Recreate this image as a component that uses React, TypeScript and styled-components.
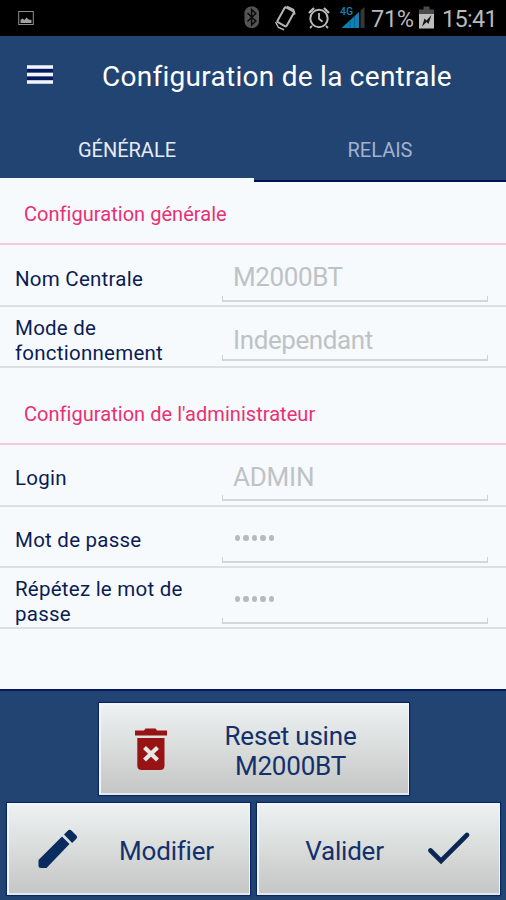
import React from 'react';
import styled, { createGlobalStyle } from 'styled-components';

const GlobalStyle = createGlobalStyle`
  * { box-sizing: border-box; }
  body { margin: 0; background: #f6fafd; font-family: Roboto, "Liberation Sans", sans-serif; }
`;

const Screen = styled.div`
  display: flex;
  flex-direction: column;
  width: 506px;
  height: 900px;
  overflow: hidden;
  background: #f6fafd;
`;

const StatusBar = styled.div`
  display: flex;
  align-items: center;
  height: 36px;
  flex: none;
  background: #000;
  color: #b9b9b9;
  svg { display: block; flex: none; }
`;

const StatusSpacer = styled.div`flex: 1;`;

const StatusText = styled.span<{ $width: number; $spacing: number }>`
  width: ${p => p.$width}px;
  flex: none;
  font-size: 23.5px;
  line-height: 36px;
  letter-spacing: ${p => p.$spacing}px;
  white-space: nowrap;
  padding-top: 2px;
`;

const AppBar = styled.header`
  display: flex;
  align-items: center;
  height: 81px;
  flex: none;
  padding-left: 26px;
  background: #224472;
`;

const MenuButton = styled.button`
  display: block;
  width: 28px;
  height: 24px;
  margin: 0 48px 2px 0;
  padding: 0;
  border: 0;
  background: none;
  svg { display: block; }
`;

const Title = styled.h1`
  margin: 0;
  color: #fff;
  font-size: 28px;
  font-weight: 400;
  line-height: 81px;
  letter-spacing: 0.27px;
  white-space: nowrap;
`;

const Tabs = styled.nav`
  display: grid;
  grid-template-columns: 254px 252px;
  height: 65px;
  flex: none;
  background: #224472;
`;

const Tab = styled.button<{ $active?: boolean }>`
  height: 65px;
  padding: ${p => (p.$active ? '4px 0 0' : '2px 0 0')};
  border: 0;
  border-bottom: ${p => (p.$active ? '4px solid #f6fafd' : '2px solid #00105a')};
  background: none;
  color: ${p => (p.$active ? '#e6ebf5' : '#a3b1cc')};
  font: 400 20px/58px Roboto, sans-serif;
`;

const Section = styled.h2<{ $height: number; $top: number }>`
  height: ${p => p.$height}px;
  flex: none;
  margin: 0;
  padding: ${p => p.$top}px 0 0 24px;
  border-bottom: 2px solid #f5cad7;
  color: #ea2f72;
  font-size: 20px;
  font-weight: 400;
  line-height: 30px;
  letter-spacing: 0.04px;
`;

const Row = styled.div<{ $height: number }>`
  display: flex;
  height: ${p => p.$height}px;
  flex: none;
  padding-left: 15px;
  border-bottom: 2px solid #dce0e4;
`;

const Label = styled.label<{ $top: number }>`
  width: 207px;
  padding: ${p => p.$top}px 20px 0 0;
  color: #0b1d54;
  font-size: 20.5px;
  line-height: 24.5px;
  letter-spacing: 0.24px;
`;

const Field = styled.div<{ $height: number; $textTop: number; $spacing?: number }>`
  width: 266px;
  height: ${p => p.$height}px;
  padding: ${p => p.$textTop}px 0 0 11px;
  color: #bfc2c5;
  font-size: 26px;
  line-height: 30px;
  letter-spacing: ${p => p.$spacing ?? 0}px;
  background:
    linear-gradient(#cfd3d7, #cfd3d7) left bottom / 1px 6px no-repeat,
    linear-gradient(#cfd3d7, #cfd3d7) right bottom / 1px 6px no-repeat,
    linear-gradient(#d3d7da, #d3d7da) left bottom / 100% 2px no-repeat;
`;

const Dots = styled.span`
  display: flex;
  gap: 3.3px;
  padding: 12px 0 0 2px;
`;

const Dot = styled.i`
  width: 5.2px;
  height: 6px;
  border-radius: 50%;
  background: #b6babd;
`;

const Footer = styled.footer`
  display: flex;
  flex-direction: column;
  align-items: center;
  gap: 8px;
  height: 211px;
  flex: none;
  margin-top: auto;
  padding-top: 12px;
  border-top: 2px solid #061a62;
  background: #224472;
`;

const Actions = styled.div`
  display: grid;
  grid-template-columns: 243px 243px;
  gap: 7px;
`;

const Button = styled.button<{ $wide?: boolean }>`
  display: flex;
  align-items: center;
  width: ${p => (p.$wide ? 310 : 243)}px;
  height: 92px;
  margin-left: ${p => (p.$wide ? 1 : 0)}px;
  padding: 0;
  border: 2px solid #f3f6f7;
  border-right-width: 1px;
  border-bottom-color: #e5e9e9;
  background: linear-gradient(#edf1f1, #c4c7c5);
  box-shadow: 0 0 1px 1px #0a2566;
  color: #14306c;
  font: 400 26px/30px Roboto, sans-serif;
  svg { display: block; }
`;

const ButtonIcon = styled.span<{ $left: number }>`
  flex: none;
  margin-left: ${p => p.$left}px;
`;

const ButtonText = styled.span<{ $left: number; $width: number }>`
  width: ${p => p.$width}px;
  flex: none;
  margin-left: ${p => p.$left}px;
  padding-top: 3px;
  text-align: center;
  letter-spacing: -0.2px;
  white-space: nowrap;
`;

const ImageIcon = () => (
  <svg width="52" height="36" viewBox="0 0 52 36">
    <rect x="18.7" y="11.5" width="14.6" height="13" fill="none" stroke="#8d8d8d" />
    <path d="M20.5 23V20l2-1.5 2 1.500 2-2.500 2 2 3 .5V23z" fill="#a2a2a2" />
  </svg>
);

const StatusIcons = () => (
  <svg width="129" height="36" viewBox="242 0 129 36" fill="none">
    <rect x="244.500" y="6.500" width="14.500" height="21.500" rx="6.500" fill="#555" />
    <path d="M247.500 13l8.300 8-4.200 4V9.500l4.200 4-8.300 8" stroke="#080808" strokeWidth="1.500" />
    <rect x="280.300" y="8.300" width="10.500" height="17" rx="1.500" transform="rotate(29 285.500 17)" stroke="#b5b5b5" strokeWidth="2" />
    <path d="M275.500 22l3 5.500 5.500 2.300M287 6.500l6.500 3 1.500 5" stroke="#b5b5b5" strokeWidth="1.500" />
    <circle cx="319" cy="18.500" r="8.700" stroke="#b9b9b9" strokeWidth="2" />
    <path d="M319 13v5.800l3.500 3M312 26l-2 2M326 26l2 2" stroke="#b9b9b9" strokeWidth="1.800" />
    <path d="M309 13l5-5M329 13l-5-5" stroke="#b9b9b9" strokeWidth="2.400" />
    <path d="M341.500 28L359 12v16z" fill="#0e80b5" />
    <path d="M350 20v8M354.500 16v12" stroke="#075a86" strokeWidth=".8" />
    <path d="M360.500 10.500l4-3.500v21h-4z" fill="#373737" />
    <text x="340" y="14.500" fill="#1684b7" fontFamily="Roboto, sans-serif" fontWeight="500" fontSize="10.500">4G</text>
  </svg>
);

const BatteryIcon = () => (
  <svg width="24" height="36" viewBox="0 0 24 36">
    <path d="M5.500 6.500h6v3h4.500v4.500H1V9.500h4.500z" fill="#4b4b4b" />
    <path d="M1 14h15v14.500H1z" fill="#bdbdbd" />
    <path d="M13.500 15l-3 9-2-2-4.500 4.500 2.500-8 2 2z" fill="#161616" />
  </svg>
);

const MenuIcon = () => (
  <svg width="28" height="24" viewBox="0 0 28 24">
    <path d="M1 6.700h26M1 14.300h26" stroke="#07185f" strokeWidth="3.200" />
    <path d="M1 3h26M1 10.500h26M1 18h26" stroke="#f2f5fc" strokeWidth="3.500" />
  </svg>
);

const TrashIcon = () => (
  <svg width="34" height="44" viewBox="0 0 34 44">
    <path d="M1 3.500h9l1.500-2h10l1.500 2H33v5H1z" fill="#981314" />
    <path d="M3.300 11h27.200v27.500q0 4.500-4.500 4.500H7.800q-4.500 0-4.500-4.500z" fill="#981314" />
    <path d="M10.500 20.500l13 12.500M23.500 20.500l-13 12.500" stroke="#e7e7e4" strokeWidth="4.200" />
  </svg>
);

const PencilIcon = () => (
  <svg width="42" height="42" viewBox="0 0 42 42">
    <path d="M1.500 32L25 8.500l7.500 7.500L9.500 40h-5.500q-2.500 0-2.500-2.500z" fill="#092b60" />
    <path d="M27 6.500l4-4q1.700-1.700 3.400 0l5 5q1.600 1.600 0 3.200l-4.300 4.300z" fill="#092b60" />
  </svg>
);

const CheckIcon = () => (
  <svg width="42" height="34" viewBox="0 0 42 34">
    <path d="M2.500 18.500l10.500 10.500L39 3" fill="none" stroke="#092654" strokeWidth="4.600" strokeLinecap="round" />
  </svg>
);

const Password = () => (
  <Dots>
    {[0, 1, 2, 3, 4].map(i => <Dot key={i} />)}
  </Dots>
);

export default function App() {
  return (
    <Screen>
      <GlobalStyle />
      <StatusBar>
        <ImageIcon />
        <StatusSpacer />
        <StatusIcons />
        <StatusText $width={47} $spacing={-0.3}>71%</StatusText>
        <BatteryIcon />
        <StatusText $width={64} $spacing={-0.7}>15:41</StatusText>
      </StatusBar>
      <AppBar>
        <MenuButton aria-label="Menu"><MenuIcon /></MenuButton>
        <Title>Configuration de la centrale</Title>
      </AppBar>
      <Tabs>
        <Tab $active>GÉNÉRALE</Tab>
        <Tab>RELAIS</Tab>
      </Tabs>
      <Section $height={63} $top={17}>Configuration générale</Section>
      <Row $height={62}>
        <Label $top={22}>Nom Centrale</Label>
        <Field $height={57} $textTop={17} $spacing={-0.4}>M2000BT</Field>
      </Row>
      <Row $height={61}>
        <Label $top={9}>Mode de fonctionnement</Label>
        <Field $height={54} $textTop={18} $spacing={-0.4}>Independant</Field>
      </Row>
      <Section $height={77} $top={31}>Configuration de l'administrateur</Section>
      <Row $height={62}>
        <Label $top={21}>Login</Label>
        <Field $height={56} $textTop={17} $spacing={-0.2}>ADMIN</Field>
      </Row>
      <Row $height={61}>
        <Label $top={21}>Mot de passe</Label>
        <Field $height={56} $textTop={16}><Password /></Field>
      </Row>
      <Row $height={61}>
        <Label $top={9}>Répétez le mot de passe</Label>
        <Field $height={56} $textTop={16}><Password /></Field>
      </Row>
      <Footer>
        <Button $wide>
          <ButtonIcon $left={33}><TrashIcon /></ButtonIcon>
          <ButtonText $left={41} $width={164}>Reset usine<br />M2000BT</ButtonText>
        </Button>
        <Actions>
          <Button>
            <ButtonIcon $left={28}><PencilIcon /></ButtonIcon>
            <ButtonText $left={36} $width={104}>Modifier</ButtonText>
          </Button>
          <Button>
            <ButtonText $left={34} $width={104}>Valider</ButtonText>
            <ButtonIcon $left={31}><CheckIcon /></ButtonIcon>
          </Button>
        </Actions>
      </Footer>
    </Screen>
  );
}
